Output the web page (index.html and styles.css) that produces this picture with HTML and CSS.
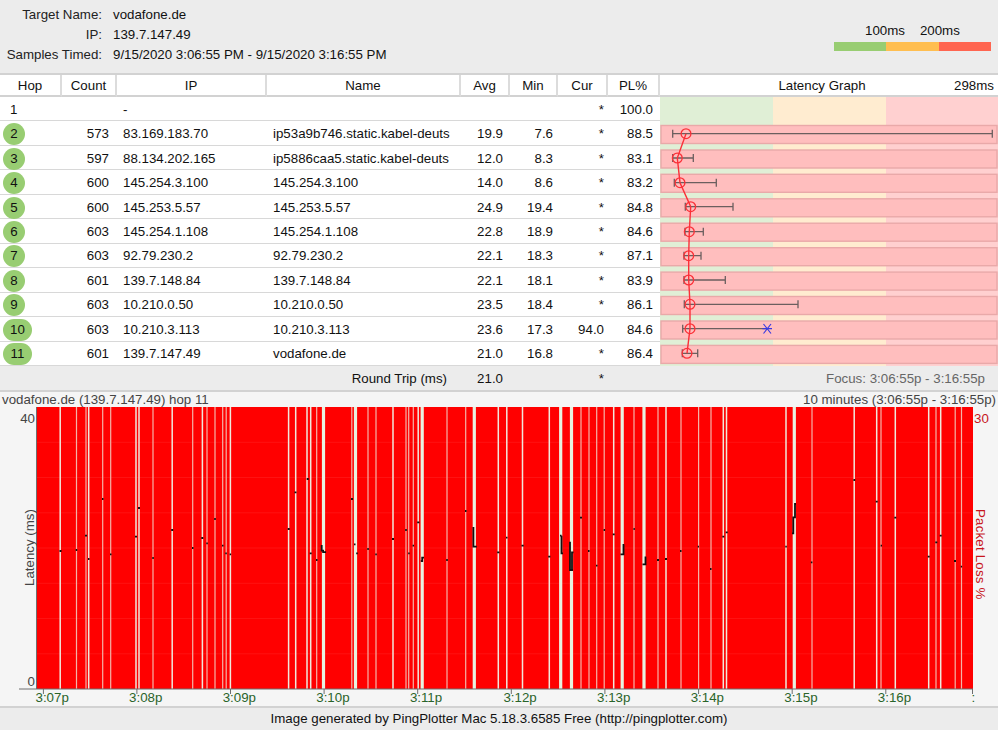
FILE: index.html
```html
<!DOCTYPE html>
<html lang="en">
<head>
<meta charset="utf-8">
<title>PingPlotter</title>
<link rel="stylesheet" href="styles.css">
</head>
<body>
<header class="summary">
  <dl class="target">
    <dt>Target Name:</dt><dd>vodafone.de</dd>
    <dt>IP:</dt><dd>139.7.147.49</dd>
    <dt>Samples Timed:</dt><dd>9/15/2020 3:06:55 PM - 9/15/2020 3:16:55 PM</dd>
  </dl>
  <div class="legend">
    <div class="legend-labels"><span>100ms</span><span>200ms</span></div>
    <div class="legend-bar"><i class="lg-green"></i><i class="lg-yellow"></i><i class="lg-red"></i></div>
  </div>
</header>

<section class="table">
  <div class="th">Hop</div><div class="th">Count</div><div class="th">IP</div><div class="th">Name</div><div class="th">Avg</div><div class="th">Min</div><div class="th">Cur</div><div class="th">PL%</div>
  <div class="th th-graph"><span class="graph-title">Latency Graph</span><span class="graph-max">298ms</span></div>

  <svg class="latency" viewBox="660 97 338 269" preserveAspectRatio="none">
    <rect class="z1" x="660" y="97" width="113" height="269"/>
    <rect class="z2" x="773" y="97" width="113" height="269"/>
    <rect class="z3" x="886" y="97" width="112" height="269"/>
    <g class="bars">
      <rect x="661" y="125.5" width="336" height="18"/>
      <rect x="661" y="150" width="336" height="18"/>
      <rect x="661" y="174.3" width="336" height="18"/>
      <rect x="661" y="198.8" width="336" height="18"/>
      <rect x="661" y="223.2" width="336" height="18"/>
      <rect x="661" y="247.7" width="336" height="18"/>
      <rect x="661" y="272.1" width="336" height="18"/>
      <rect x="661" y="296.5" width="336" height="18"/>
      <rect x="661" y="321" width="336" height="18"/>
      <rect x="661" y="345.4" width="336" height="18"/>
    </g>
    <path class="whisk" d="M672.7 133.7H992.3M672.7 129.7v8M992.3 129.7v8M672.7 158H693.3M672.7 154v8M693.3 154v8M674.3 182.7H716.3M674.3 178.7v8M716.3 178.7v8M685.3 206.7H733M685.3 202.7v8M733 202.7v8M685 231.7H703.3M685 227.7v8M703.3 227.7v8M684 255.7H701M684 251.7v8M701 251.7v8M684 280H725.3M684 276v8M725.3 276v8M684.3 304.3H798M684.3 300.3v8M798 300.3v8M682.7 328.7H767.3M682.7 324.7v8M682.3 353.3H697.7M682.3 349.3v8M697.7 349.3v8"/>
    <path class="route" d="M686 133.7L677.3 158L680 182.7L690.7 206.7L689.3 231.7L688.7 255.7L688.7 280L690 304.3L690 328.7L687 353.3"/>
    <g class="dots">
      <circle cx="686" cy="133.7" r="4.9"/><circle cx="677.3" cy="158" r="4.9"/><circle cx="680" cy="182.7" r="4.9"/><circle cx="690.7" cy="206.7" r="4.9"/><circle cx="689.3" cy="231.7" r="4.9"/><circle cx="688.7" cy="255.7" r="4.9"/><circle cx="688.7" cy="280" r="4.9"/><circle cx="690" cy="304.3" r="4.9"/><circle cx="690" cy="328.7" r="4.9"/><circle cx="687" cy="353.3" r="4.9"/>
    </g>
    <path class="cur" d="M762.5 328.7H772M763.5 324L771 333.5M771 324L763.5 333.5"/>
  </svg>

  <div class="td hop">1</div><div class="td num"></div><div class="td ip">-</div><div class="td name"></div><div class="td num avg"></div><div class="td num min"></div><div class="td num c">*</div><div class="td num pl">100.0</div>
  <div class="td hop"><span class="pill">2</span></div><div class="td num">573</div><div class="td ip">83.169.183.70</div><div class="td name">ip53a9b746.static.kabel-deuts</div><div class="td num avg">19.9</div><div class="td num min">7.6</div><div class="td num c">*</div><div class="td num pl">88.5</div>
  <div class="td hop"><span class="pill">3</span></div><div class="td num">597</div><div class="td ip">88.134.202.165</div><div class="td name">ip5886caa5.static.kabel-deuts</div><div class="td num avg">12.0</div><div class="td num min">8.3</div><div class="td num c">*</div><div class="td num pl">83.1</div>
  <div class="td hop"><span class="pill">4</span></div><div class="td num">600</div><div class="td ip">145.254.3.100</div><div class="td name">145.254.3.100</div><div class="td num avg">14.0</div><div class="td num min">8.6</div><div class="td num c">*</div><div class="td num pl">83.2</div>
  <div class="td hop"><span class="pill">5</span></div><div class="td num">600</div><div class="td ip">145.253.5.57</div><div class="td name">145.253.5.57</div><div class="td num avg">24.9</div><div class="td num min">19.4</div><div class="td num c">*</div><div class="td num pl">84.8</div>
  <div class="td hop"><span class="pill">6</span></div><div class="td num">603</div><div class="td ip">145.254.1.108</div><div class="td name">145.254.1.108</div><div class="td num avg">22.8</div><div class="td num min">18.9</div><div class="td num c">*</div><div class="td num pl">84.6</div>
  <div class="td hop"><span class="pill">7</span></div><div class="td num">603</div><div class="td ip">92.79.230.2</div><div class="td name">92.79.230.2</div><div class="td num avg">22.1</div><div class="td num min">18.3</div><div class="td num c">*</div><div class="td num pl">87.1</div>
  <div class="td hop"><span class="pill">8</span></div><div class="td num">601</div><div class="td ip">139.7.148.84</div><div class="td name">139.7.148.84</div><div class="td num avg">22.1</div><div class="td num min">18.1</div><div class="td num c">*</div><div class="td num pl">83.9</div>
  <div class="td hop"><span class="pill">9</span></div><div class="td num">603</div><div class="td ip">10.210.0.50</div><div class="td name">10.210.0.50</div><div class="td num avg">23.5</div><div class="td num min">18.4</div><div class="td num c">*</div><div class="td num pl">86.1</div>
  <div class="td hop"><span class="pill wide">10</span></div><div class="td num">603</div><div class="td ip">10.210.3.113</div><div class="td name">10.210.3.113</div><div class="td num avg">23.6</div><div class="td num min">17.3</div><div class="td num c">94.0</div><div class="td num pl">84.6</div>
  <div class="td hop"><span class="pill wide">11</span></div><div class="td num">601</div><div class="td ip">139.7.147.49</div><div class="td name">vodafone.de</div><div class="td num avg">21.0</div><div class="td num min">16.8</div><div class="td num c">*</div><div class="td num pl">86.4</div>
</section>

<section class="round">
  <span class="rt-label">Round Trip (ms)</span><span class="rt-avg">21.0</span><span class="rt-cur">*</span><span class="rt-focus">Focus: 3:06:55p - 3:16:55p</span>
</section>

<section class="chart">
  <div class="chart-head"><span>vodafone.de (139.7.147.49) hop 11</span><span>10 minutes (3:06:55p - 3:16:55p)</span></div>
  <div class="chart-body">
    <div class="y-left">
      <span>40</span>
      <span class="y-title">Latency (ms)</span>
      <span>0</span>
    </div>
    <svg class="plot" viewBox="19 407 979 294" preserveAspectRatio="none">
      <rect class="plot-red" x="37" y="407" width="936" height="282"/>
      <path class="grid" d="M37 442.3H973M37 477.5H973M37 512.8H973M37 548H973M37 583.3H973M37 618.5H973M37 653.8H973"/>
      <path class="gap-thin" d="M76.5 407V689M86 407V689M102.7 407V689M110.7 407V689M153 407V689M192.7 407V689M207 407V689M215 407V689M222.7 407V689M226.2 407V689M316.7 407V689M351.8 407V689M368 407V689M376 407V689M406 407V689M408.7 407V689M413.3 407V689M447 407V689M465.7 407V689M581 407V689M589 407V689M596.7 407V689M604.2 407V689M634 407V689M658 407V689M681 407V689M698.6 407V689M711 407V689M812 407V689M881 407V689M936 407V689M955.2 407V689M961.5 407V689"/>
      <path class="gap-mid" d="M60.2 407V689M88.7 407V689M136 407V689M139 407V689M172.2 407V689M202.4 407V689M230.4 407V689M288.6 407V689M295.7 407V689M307 407V689M310.7 407V689M393 407V689M418.2 407V689M498.3 407V689M506.8 407V689M522.5 407V689M549.3 407V689M613.7 407V689M666 407V689M723.3 407V689M726.5 407V689M786 407V689M854.2 407V689M876.7 407V689M895.3 407V689M928.7 407V689M940.7 407V689"/>
      <path class="gap-wide" d="M323.5 407V689M355.5 407V689M422.2 407V689M474.3 407V689M560.7 407V689M571.5 407V689M622.2 407V689M644 407V689M794.3 407V689"/>
      <path class="trace" d="M59.5 551h2M75.7 550h1.5M85 535.7h2M88 559h1.5M102 499h1.5M110 554.3h1.5M135 536.7h2M138 508h2M152.3 558h1.5M171.2 530h2M192 548h1.5M201.3 538h2M206.3 543.3h1.5M214.2 519h1.6M222 545.7h1.5M225.3 553.3h1.5M229.6 554.3h1.5M287.7 529h2M294.5 492.3h2M306.7 479h2M309.7 553.3h2M316 560h1.5M351 499h2M321.7 545v5.7h1.4v1.5h3M354 544.3h1.5M356.2 553.3h1.6M367.3 549h1.5M375.3 554.3h1.5M392 539h2M405.2 530h1.6M408.2 553.3h1.5M412.6 545.7h1.4M417.2 522.3h2.2M420.8 561h1.4v-3.3h1.8M446.2 560h1.6M465 511h1.5M473.4 527v19.7h3.4M497.2 552.3h2.2M506 537.7h1.5M521.5 545.7h2.2M548.2 556.7h2.2M560 535.7h1.5M561.5 535.7v17.6h1.5M570 541.7v28.3h3M572 570v-17.7h1.5M580 517.7h2M588 551h1.5M596 565.7h1.5M603.6 530h1.5M612.7 534.3h2M620.5 554.3h3v-9.3h.8M633.5 529h1.3M642.5 564.3h3v-7h.8M657 560h2M665 559h2M680 551h1.5M697.7 546.7h1.3M710 569h1.5M722.3 536.7h2M725.7 532.3h2M785.3 546.7h1.5M792 533.3h1.3v-16h1.7v-13.3h1M810.9 562.3h1.5M853.4 480h1.8M875.7 501.7h2M880.7 545.7h1.3M894.3 517.7h2M927.7 556.7h2M935.3 542.3h2M939.7 535.7h2M954 561h2M960.8 566.7h1.3"/>
      <path class="axis" d="M36.5 407V689M19 689H973M43.4 689v5M136.9 689v5M230.5 689v5M324.1 689v5M417.7 689v5M511.3 689v5M604.9 689v5M698.6 689v5M792.2 689v5M885.8 689v5M972.5 689v5"/>
    </svg>
    <div class="y-right">
      <span>30</span>
      <span class="y-title-r">Packet Loss %</span>
    </div>
    <div class="x-labels">
      <span>3:07p</span><span>3:08p</span><span>3:09p</span><span>3:10p</span><span>3:11p</span><span>3:12p</span><span>3:13p</span><span>3:14p</span><span>3:15p</span><span>3:16p</span><span>:</span>
    </div>
  </div>
</section>

<footer class="foot">Image generated by PingPlotter Mac 5.18.3.6585 Free (http://pingplotter.com)</footer>
</body>
</html>
```

FILE: styles.css
```css
* { box-sizing: border-box; }
html, body { margin: 0; padding: 0; }
body {
  width: 998px;
  height: 730px;
  overflow: hidden;
  background: #ececec;
  color: #111;
  font-family: "Liberation Sans", Arial, sans-serif;
  font-size: 13.3px;
  line-height: 16px;
}

/* top summary */
.summary {
  height: 73px;
  display: flex;
  justify-content: space-between;
}
.target {
  margin: 0;
  padding-top: 7px;
  display: grid;
  grid-template-columns: 102px auto;
  column-gap: 11px;
  grid-auto-rows: 20px;
  align-content: start;
}
.target dt { text-align: right; color: #222; white-space: nowrap; }
.target dd { margin: 0; }
.legend { width: 164px; padding-top: 23px; }
.legend-labels {
  display: flex;
  gap: 15px;
  padding-left: 31px;
}
.legend-bar {
  display: flex;
  width: 157px;
  height: 9px;
  margin-top: 3px;
}
.legend-bar i { flex: 1; }
.lg-green { background: #98cd72; }
.lg-yellow { background: #ffbe50; }
.lg-red { background: #ff6550; }

/* table */
.table {
  display: grid;
  grid-template-columns: 62px 55px 150px 194px 49px 48px 50px 52px 338px;
  grid-template-rows: 22px repeat(11, 24.4545px);
  background: #fff;
  border-top: 2px solid #d2d2d2;
}
.th {
  display: flex;
  align-items: center;
  justify-content: center;
  padding-top: 1px;
  border-right: 2px solid #dcdcdc;
  border-bottom: 2px solid #d2d2d2;
}
.th-graph {
  position: relative;
  border-right: 0;
}
.graph-title { margin-right: 14px; }
.graph-max { position: absolute; right: 4px; top: 3px; }
.latency {
  grid-column: 9;
  grid-row: 2 / span 11;
  width: 338px;
  height: 269px;
  display: block;
}
.z1 { fill: #e0efd6; }
.z2 { fill: #ffecd0; }
.z3 { fill: #ffd0d0; }
.bars rect { fill: #ffbebe; stroke: #e9a9a9; stroke-width: 1.4; }
.whisk { fill: none; stroke: #6b5f5f; stroke-width: 1.3; }
.route { fill: none; stroke: #fb3038; stroke-width: 1.4; }
.dots circle { fill: none; stroke: #fb3038; stroke-width: 1.3; }
.cur { fill: none; stroke: #3a3ae0; stroke-width: 1.2; }

.td {
  display: flex;
  align-items: center;
  padding-top: 2px;
  border-bottom: 1.5px solid #d8d8d8;
  min-width: 0;
  white-space: nowrap;
}
.hop { padding-left: 10px; }
.hop:has(.pill) { padding-left: 3px; }
.pill {
  display: flex;
  flex: none;
  align-items: center;
  justify-content: center;
  width: 22px;
  height: 22px;
  border-radius: 11px;
  background: #98cd72;
}
.pill.wide { width: 29px; }
.num { justify-content: flex-end; padding-right: 8px; }
.ip { padding-left: 6px; }
.name { padding-left: 6px; }
.avg { padding-right: 7px; }
.min { padding-right: 5px; }
.c { padding-right: 4px; }
.pl { padding-right: 7px; }

/* round trip row */
.round {
  height: 26px;
  padding-top: 3px;
  display: grid;
  grid-template-columns: 447px 56px 101px 1fr;
  align-items: center;
  border-bottom: 2px solid #d2d2d2;
}
.rt-label, .rt-avg, .rt-cur { text-align: right; }
.rt-focus { text-align: right; padding-right: 13px; color: #666; }

/* chart */
.chart {
  height: 316px;
  background: #f5f5f5;
  border-bottom: 2px solid #d2d2d2;
}
.chart-head {
  height: 15px;
  display: flex;
  justify-content: space-between;
  padding: 0 2px;
  color: #444;
  line-height: 16px;
}
.chart-body {
  position: relative;
  height: 294px;
}
.plot {
  margin-left: 19px;
  width: 979px;
  height: 294px;
  display: block;
}
.plot-red { fill: #ff0000; }
.grid { fill: none; stroke: rgba(255, 255, 255, .07); stroke-width: 1; }
.gap-thin { fill: none; stroke: #f3b3a8; stroke-width: 1.2; }
.gap-mid { fill: none; stroke: #f0e8dc; stroke-width: 1.5; }
.gap-wide { fill: none; stroke: #e8f2e0; stroke-width: 3.2; }
.trace { fill: none; stroke: #111; stroke-width: 1.8; }
.axis { fill: none; stroke: #6e6e6e; stroke-width: 1; }

.y-left {
  position: absolute;
  left: 0;
  top: 4px;
  width: 35px;
  height: 279px;
  color: #444;
  text-align: right;
}
.y-left span { position: absolute; right: 0; }
.y-left span:first-child { top: 0; }
.y-left span:last-child { bottom: 0; }
.y-left .y-title {
  top: 99px;
  right: -3px;
  writing-mode: vertical-rl;
  transform: rotate(180deg);
  white-space: nowrap;
  height: 76px;
  width: 16px;
}
.y-right {
  position: absolute;
  left: 974px;
  top: 4px;
  color: #c8161c;
}
.y-right span { display: block; white-space: nowrap; }
.y-title-r {
  writing-mode: vertical-rl;
  margin-top: 82px;
  margin-left: -2px;
  letter-spacing: .2px;
}
.x-labels {
  position: absolute;
  left: 35.5px;
  top: 283px;
  display: flex;
  color: #2a642a;
}
.x-labels span { flex: 0 0 93.6px; white-space: nowrap; }
.x-labels span:last-child { flex: none; }

.foot {
  height: 22px;
  text-align: center;
  line-height: 22px;
  color: #111;
}
```
